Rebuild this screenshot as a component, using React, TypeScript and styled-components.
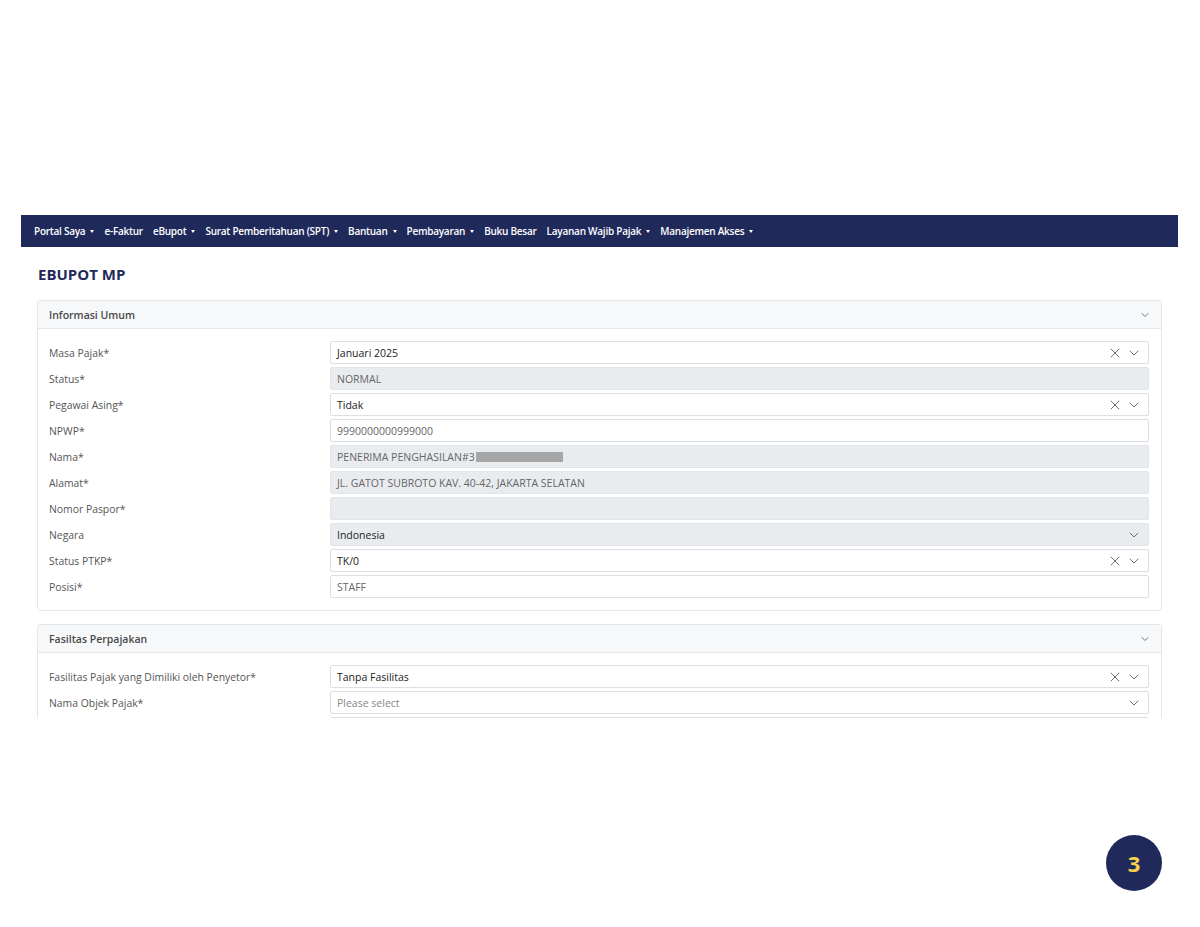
import React from "react";
import styled, { createGlobalStyle } from "styled-components";
import { X, ChevronDown } from "lucide-react";

const Global = createGlobalStyle`
  body {
    margin: 0;
    background: #fff;
    font-family: "Open Sans", "Noto Sans", Arial, sans-serif;
  }
`;

const Page = styled.div`
  width: 1200px;
  height: 927px;
  padding-top: 215px;
  box-sizing: border-box;
`;

const Frame = styled.div`
  margin-left: 21px;
  width: 1157px;
  height: 503px;
  overflow: hidden;
  background: #fff;
`;

const NavBar = styled.div`
  height: 32px;
  background: #1f2a5b;
  display: flex;
  align-items: center;
  padding-left: 13px;
  gap: 10px;
`;

const NavItem = styled.span`
  color: #fff;
  font-size: 10px;
  font-weight: 600;
  letter-spacing: -0.25px;
  display: flex;
  align-items: center;
  gap: 5px;
`;

const Caret = styled.span`
  width: 0;
  height: 0;
  border-left: 2.5px solid transparent;
  border-right: 2.5px solid transparent;
  border-top: 3px solid #fff;
`;

const Content = styled.div`
  padding: 0 16px;
`;

const Title = styled.h1`
  margin: 0;
  padding: 17px 0 0 1px;
  height: 36px;
  box-sizing: border-box;
  font-size: 15px;
  font-weight: 700;
  color: #1f2a5b;
`;

const Panel = styled.div`
  margin-top: 17px;
  border: 1px solid #e3e6ea;
  border-radius: 3px;
  & + & {
    margin-top: 13px;
  }
`;

const PanelHeader = styled.div`
  height: 27px;
  background: #f7f8fa;
  border-bottom: 1px solid #e3e6ea;
  display: flex;
  align-items: center;
  justify-content: space-between;
  padding: 0 10px 0 11px;
  font-size: 10.5px;
  font-weight: 600;
  color: #4a4a4a;
  svg {
    color: #666;
  }
`;

const PanelBody = styled.div`
  padding: 12px 12px 12px 11px;
  display: grid;
  grid-template-columns: 281px 1fr;
  row-gap: 3px;
  align-items: center;
`;

const Label = styled.div`
  font-size: 10.4px;
  color: #555;
`;

const Field = styled.div<{ $disabled?: boolean; $strong?: boolean }>`
  height: 23px;
  box-sizing: border-box;
  border: 1px solid ${(p) => (p.$disabled ? "#e1e4e8" : "#dcdfe3")};
  background: ${(p) => (p.$disabled ? "#e9ecef" : "#fff")};
  border-radius: 2px;
  display: flex;
  align-items: center;
  padding: 0 6px 0 6px;
  font-size: 10.5px;
  color: ${(p) => (p.$strong ? "#222" : "#666")};
`;

const Value = styled.span<{ $placeholder?: boolean }>`
  flex: 1;
  color: ${(p) => (p.$placeholder ? "#888" : "inherit")};
  display: flex;
  align-items: center;
`;

const Icons = styled.span`
  display: flex;
  align-items: center;
  gap: 3px;
  color: #6f6f6f;
`;

const Redacted = styled.span`
  display: inline-block;
  width: 87px;
  height: 10px;
  background: #a6a6a6;
  margin-left: 1px;
`;

const Footer = styled.div`
  display: flex;
  justify-content: flex-end;
  padding: 117px 38px 0 0;
`;

const Badge = styled.div`
  width: 56px;
  height: 56px;
  border-radius: 50%;
  background: #1f2a5b;
  color: #f6d04d;
  display: flex;
  align-items: center;
  justify-content: center;
  font-size: 22px;
  font-weight: 700;
  font-family: "Open Sans", Arial, sans-serif;
`;

type Row = {
  label: string;
  value?: React.ReactNode;
  disabled?: boolean;
  strong?: boolean;
  clear?: boolean;
  select?: boolean;
  placeholder?: boolean;
};

const umum: Row[] = [
  { label: "Masa Pajak*", value: "Januari 2025", strong: true, clear: true, select: true },
  { label: "Status*", value: "NORMAL", disabled: true },
  { label: "Pegawai Asing*", value: "Tidak", strong: true, clear: true, select: true },
  { label: "NPWP*", value: "9990000000999000" },
  {
    label: "Nama*",
    value: (
      <>
        PENERIMA PENGHASILAN#3
        <Redacted />
      </>
    ),
    disabled: true,
  },
  { label: "Alamat*", value: "JL. GATOT SUBROTO KAV. 40-42, JAKARTA SELATAN", disabled: true },
  { label: "Nomor Paspor*", value: "", disabled: true },
  { label: "Negara", value: "Indonesia", disabled: true, strong: true, select: true },
  { label: "Status PTKP*", value: "TK/0", strong: true, clear: true, select: true },
  { label: "Posisi*", value: "STAFF" },
];

const fasilitas: Row[] = [
  { label: "Fasilitas Pajak yang Dimiliki oleh Penyetor*", value: "Tanpa Fasilitas", strong: true, clear: true, select: true },
  { label: "Nama Objek Pajak*", value: "Please select", placeholder: true, select: true },
  { label: "", value: "" },
];

const navItems: [string, boolean][] = [
  ["Portal Saya", true],
  ["e-Faktur", false],
  ["eBupot", true],
  ["Surat Pemberitahuan (SPT)", true],
  ["Bantuan", true],
  ["Pembayaran", true],
  ["Buku Besar", false],
  ["Layanan Wajib Pajak", true],
  ["Manajemen Akses", true],
];

const Rows: React.FC<{ rows: Row[] }> = ({ rows }) => (
  <PanelBody>
    {rows.map((r, i) => (
      <React.Fragment key={i}>
        <Label>{r.label}</Label>
        <Field $disabled={r.disabled} $strong={r.strong}>
          <Value $placeholder={r.placeholder}>{r.value}</Value>
          {(r.clear || r.select) && (
            <Icons>
              {r.clear && <X size={16} strokeWidth={1.5} />}
              {r.select && <ChevronDown size={16} strokeWidth={1.5} />}
            </Icons>
          )}
        </Field>
      </React.Fragment>
    ))}
  </PanelBody>
);

const App: React.FC = () => {
  return (
    <Page>
      <Global />
      <Frame>
        <NavBar>
          {navItems.map(([name, caret]) => (
            <NavItem key={name}>
              {name}
              {caret && <Caret />}
            </NavItem>
          ))}
        </NavBar>
        <Content>
          <Title>EBUPOT MP</Title>
          <Panel>
            <PanelHeader>
              Informasi Umum
              <ChevronDown size={12} strokeWidth={1.8} />
            </PanelHeader>
            <Rows rows={umum} />
          </Panel>
          <Panel>
            <PanelHeader>
              Fasiltas Perpajakan
              <ChevronDown size={12} strokeWidth={1.8} />
            </PanelHeader>
            <Rows rows={fasilitas} />
          </Panel>
        </Content>
      </Frame>
      <Footer>
        <Badge>3</Badge>
      </Footer>
    </Page>
  );
};

export default App;
